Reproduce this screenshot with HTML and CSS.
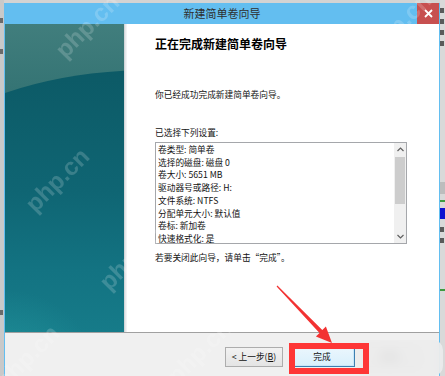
FILE: index.html
```html
<!DOCTYPE html>
<html lang="zh-CN">
<head>
<meta charset="utf-8">
<title>新建简单卷向导</title>
<link rel="stylesheet" href="styles.css">
</head>
<body>
<div class="desk">
  <div class="gutter gutter-left">
    <span class="mark"></span>
    <span class="mark"></span>
    <span class="mark mark-low"></span>
  </div>
  <div class="window">
    <div class="titlebar">
      <span></span>
      <span class="title">新建简单卷向导</span>
      <span class="close">
        <svg width="9" height="9" viewBox="0 0 9 9"><path d="M1 1L8 8M8 1L1 8" stroke="#fff" stroke-width="1.8"/></svg>
      </span>
    </div>
    <div class="main">
      <div class="side"><div class="side-glow"></div></div>
      <div class="divider"></div>
      <div class="content">
        <h1 class="heading">正在完成新建简单卷向导</h1>
        <p class="line line-first">你已经成功完成新建简单卷向导。</p>
        <p class="line line-label">已选择下列设置:</p>
        <div class="listbox">
          <div class="list-items">
            <div>卷类型: 简单卷</div>
            <div>选择的磁盘: 磁盘 0</div>
            <div>卷大小: 5651 MB</div>
            <div>驱动器号或路径: H:</div>
            <div>文件系统: NTFS</div>
            <div>分配单元大小: 默认值</div>
            <div>卷标: 新加卷</div>
            <div>快速格式化: 是</div>
          </div>
          <div class="scrollbar">
            <div class="sb-arrow">
              <svg width="7" height="5" viewBox="0 0 7 5"><path d="M0.5 4L3.5 1L6.5 4" fill="none" stroke="#606060" stroke-width="1.2"/></svg>
            </div>
            <div class="sb-track"><div class="sb-thumb"></div></div>
            <div class="sb-arrow">
              <svg width="7" height="5" viewBox="0 0 7 5"><path d="M0.5 1L3.5 4L6.5 1" fill="none" stroke="#606060" stroke-width="1.2"/></svg>
            </div>
          </div>
        </div>
        <p class="line line-close">若要关闭此向导，请单击“完成”。</p>
      </div>
    </div>
    <div class="footer">
      <button class="btn btn-back">&lt; 上一步(<u>B</u>)</button>
      <button class="btn btn-finish">完成</button>
      <button class="btn btn-cancel">取消</button>
    </div>
  </div>
  <div class="gutter gutter-right">
    <span class="mark mark-r"></span>
    <span class="mark mark-r"></span>
    <span class="mark mark-r"></span>
    <span class="mark mark-r"></span>
    <span class="rg-gray"></span>
    <span class="rg-green"></span>
    <span class="rg-blue"></span>
    <span class="mark mark-r mark-r2"></span>
    <span class="mark mark-r"></span>
    <span class="rg-green rg-green2"></span>
  </div>
</div>

<div class="blur-patch"></div>
<div class="highlight-box"></div>
<svg class="arrow" width="445" height="376" viewBox="0 0 445 376">
  <polygon points="277.4,285.6 322.3,330.1 325.9,326.6 332,343 315.9,336.4 319.5,332.9 276.6,286.4" fill="#f23232"/>
</svg>

<span class="wm wm1">php.cn</span>
<span class="wm wm2">php.cn</span>
<span class="wm wm3">php.cn</span>
<span class="wm wm4">php.cn</span>
<span class="wm wm5">php.cn</span>
<span class="wm wm6">php.cn</span>
</body>
</html>
```

FILE: styles.css
```css
* { box-sizing: border-box; }

html, body {
  margin: 0;
  padding: 0;
}

body {
  width: 445px;
  height: 376px;
  overflow: hidden;
  position: relative;
  background: #d3d3d3;
  font-family: "Noto Sans CJK SC", "Microsoft YaHei", sans-serif;
  color: #000;
}

.desk {
  display: flex;
  height: 376px;
  overflow: hidden;
}

.gutter {
  display: flex;
  flex-direction: column;
  overflow: hidden;
}

.gutter-left {
  width: 4px;
  background: #c9c9c9;
  padding-top: 18px;
  gap: 26px;
}

.mark {
  display: block;
  width: 3px;
  height: 5px;
  background: #6a6a6a;
}

.mark-low {
  margin-top: 230px;
}

.gutter-right {
  width: 5px;
  background: #d9d9d9;
  padding-top: 8px;
  gap: 6px;
}

.mark-r {
  width: 4px;
  height: 5px;
  background: #5a5a5a;
}

.mark-r2 {
  margin-top: 2px;
}

.rg-gray {
  display: block;
  height: 12px;
  margin-top: 130px;
  background: #bdbdbd;
}

.rg-green {
  display: block;
  height: 2px;
  background: #3f9a3f;
}

.rg-blue {
  display: block;
  height: 11px;
  background: #1010d0;
}

.rg-green2 {
  margin-top: 40px;
}

.window {
  width: 436px;
  margin-top: 3px;
  display: flex;
  flex-direction: column;
  background: #63bef0;
  padding: 0 1px 0 1px;
}

.titlebar {
  height: 21px;
  display: grid;
  grid-template-columns: 22px 1fr 22px;
  align-items: center;
}

.title {
  text-align: center;
  font-size: 11px;
  line-height: 21px;
  color: #2f2f2f;
}

.close {
  height: 21px;
  background: #c75050;
  display: flex;
  align-items: center;
  justify-content: center;
}

.main {
  height: 308px;
  display: flex;
}

.side {
  width: 119px;
  position: relative;
  overflow: hidden;
  background: linear-gradient(180deg, #417e7d 0%, #367575 60px, #2f6f71 100px);
}

.side-glow {
  position: absolute;
  left: -155px;
  top: 46px;
  width: 600px;
  height: 370px;
  border-radius: 50%;
  background:
    radial-gradient(ellipse 90px 80px at 155px 300px, rgba(40, 160, 165, 0.55), rgba(40, 160, 165, 0) 100%),
    linear-gradient(180deg, #0c5a66 0%, #0f6573 120px, #137382 200px, #167b89 262px);
}

.divider {
  width: 3px;
  background: linear-gradient(90deg, #c9cdd0, #e6e8ea 50%, #f8f8f8);
}

.content {
  flex: 1;
  background: #fff;
  padding: 10px 0 0 28px;
}

.heading {
  margin: 0;
  font-size: 12px;
  line-height: 20px;
  font-weight: 700;
  color: #000;
}

.line {
  margin: 0;
  font-size: 8.7px;
  line-height: 16px;
  color: #111;
}

.line-first { margin-top: 33px; }
.line-label { margin-top: 22px; }
.line-close { margin-top: 6px; }

.listbox {
  margin-top: 1px;
  width: 252px;
  height: 102px;
  border: 1px solid #a5a7ab;
  display: flex;
  overflow: hidden;
}

.list-items {
  flex: 1;
  height: 100px;
  padding: 1px 0 0 2px;
  font-size: 8.7px;
  line-height: 12.7px;
  color: #111;
  overflow: hidden;
}

.scrollbar {
  width: 12px;
  background: #f0f0f0;
  display: flex;
  flex-direction: column;
}

.sb-arrow {
  height: 13px;
  display: flex;
  align-items: center;
  justify-content: center;
}

.sb-track {
  flex: 1;
  padding: 1px 1px 26px 1px;
  display: flex;
}

.sb-thumb {
  flex: 1;
  background: #cdcdcd;
}

.footer {
  flex: 1;
  background: #f0f0f0;
  border-top: 1px solid #a0a0a0;
  display: flex;
  align-items: flex-start;
  padding: 14px 0 0 220px;
  gap: 6px;
}

.btn {
  height: 20px;
  margin: 0;
  padding: 0;
  font-family: inherit;
  font-size: 8.7px;
  line-height: 18px;
  color: #111;
  border: 1px solid #adadad;
  background: linear-gradient(180deg, #f2f2f2, #e4e4e4);
}

.btn u {
  text-decoration: underline;
}

.btn-back { width: 58px; }

.btn-finish {
  width: 66px;
  border-color: #3c7fb1;
  background: linear-gradient(180deg, #eaf6fd, #d9f0fc);
  box-shadow: inset 0 0 0 1px #c9e6f8;
}

.btn-cancel {
  width: 58px;
}

.blur-patch {
  position: absolute;
  left: 355px;
  top: 340px;
  width: 88px;
  height: 36px;
  border-radius: 10px;
  background: rgba(236, 236, 236, 0.85);
  backdrop-filter: blur(6px);
}

.highlight-box {
  position: absolute;
  left: 289px;
  top: 343px;
  width: 80px;
  height: 31px;
  border: 6px solid #fe3636;
}

.arrow {
  position: absolute;
  left: 0;
  top: 0;
}

.wm {
  position: absolute;
  font-family: "Liberation Sans", Arial, sans-serif;
  font-weight: 700;
  font-size: 24px;
  line-height: 24px;
  color: rgba(255, 255, 255, 0.18);
  transform: rotate(-45deg);
  white-space: nowrap;
  pointer-events: none;
}

.wm1 { left: 18px; top: 168px; }
.wm2 { left: 92px; top: 246px; }
.wm3 { left: -12px; top: 345px; }
.wm4 { left: 160px; top: 340px; }
.wm5 { left: 48px; top: 14px; }
.wm6 { left: 360px; top: 12px; }
```
